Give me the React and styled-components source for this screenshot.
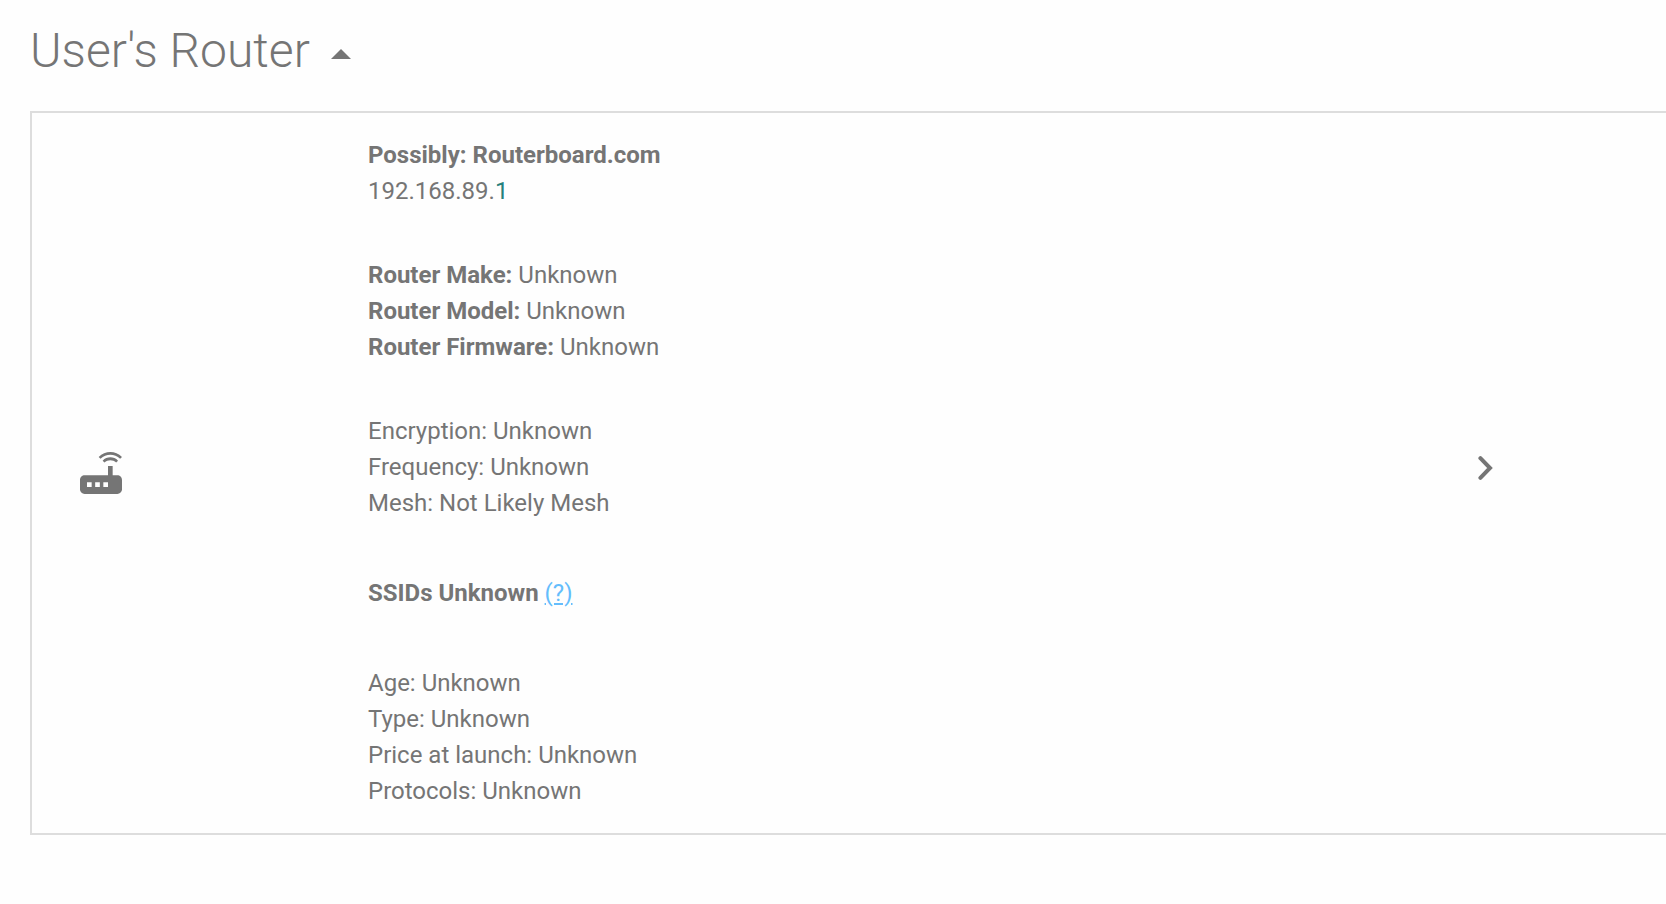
import React from "react";
import styled, { createGlobalStyle } from "styled-components";
import { MdRouter } from "react-icons/md";

const Global = createGlobalStyle`
  *, *::before, *::after { box-sizing: border-box; }
  body {
    margin: 0;
    background: #fefefe;
    color: #757575;
    font-family: Roboto, "Liberation Sans", sans-serif;
    font-size: 24px;
    line-height: 36px;
  }
`;

const Page = styled.main`
  padding: 21px 0 0 30px;
`;

const Heading = styled.h1`
  margin: 0 0 30px;
  font-size: 48px;
  line-height: 60px;
  font-weight: 300;
`;

const Toggle = styled.button`
  display: flex;
  align-items: center;
  gap: 21px;
  padding: 0;
  border: 0;
  background: none;
  color: inherit;
  font: inherit;
  cursor: pointer;
`;

const Caret = styled.svg`
  width: 20px;
  height: 10px;
  margin-top: 6px;
  fill: currentColor;
`;

const Card = styled.section`
  display: grid;
  grid-template-columns: 336px 1fr 188px;
  align-items: center;
  padding: 24px 0;
  border: 2px solid #dddddd;
  border-right: 0;
`;

const RouterIcon = styled(MdRouter)`
  display: block;
  width: 56px;
  height: 56px;
  margin-left: 41px;
`;

const Details = styled.div`
  display: flex;
  flex-direction: column;
  gap: 48px;
`;

const Group = styled.div`
  padding: ${({ $spaced }) => ($spaced ? "6px 0" : "0")};
`;

const Line = styled.p`
  margin: 0;
`;

const Host = styled.span`
  color: #26807c;
`;

const HelpLink = styled.a`
  color: #64bdfc;
`;

const OpenButton = styled.button`
  justify-self: start;
  display: flex;
  padding: 0 0 10px;
  border: 0;
  background: none;
  color: inherit;
  cursor: pointer;
`;

const Chevron = styled.svg`
  width: 15px;
  height: 24px;
  fill: none;
  stroke: currentColor;
  stroke-width: 4;
  stroke-linecap: round;
`;

const Row = ({ label, value }) => (
  <Line>
    <strong>{label}</strong> {value}
  </Line>
);

export default function App() {
  return (
    <>
      <Global />
      <Page>
        <Heading>
          <Toggle type="button" aria-expanded="true" aria-controls="router-card">
            User's Router
            <Caret viewBox="0 0 20 10" aria-hidden="true">
              <path d="M0 10 10 0l10 10z" />
            </Caret>
          </Toggle>
        </Heading>
        <Card id="router-card">
          <RouterIcon aria-hidden="true" />
          <Details>
            <Group>
              <Line>
                <strong>Possibly: Routerboard.com</strong>
              </Line>
              <Line>
                192.168.89.<Host>1</Host>
              </Line>
            </Group>
            <Group>
              <Row label="Router Make:" value="Unknown" />
              <Row label="Router Model:" value="Unknown" />
              <Row label="Router Firmware:" value="Unknown" />
            </Group>
            <Group>
              <Line>Encryption: Unknown</Line>
              <Line>Frequency: Unknown</Line>
              <Line>Mesh: Not Likely Mesh</Line>
            </Group>
            <Group $spaced>
              <Line>
                <strong>SSIDs Unknown</strong> <HelpLink href="#ssids">(?)</HelpLink>
              </Line>
            </Group>
            <Group>
              <Line>Age: Unknown</Line>
              <Line>Type: Unknown</Line>
              <Line>Price at launch: Unknown</Line>
              <Line>Protocols: Unknown</Line>
            </Group>
          </Details>
          <OpenButton type="button" aria-label="Open router details">
            <Chevron viewBox="0 0 15 24" aria-hidden="true">
              <path d="M2.4 2.2 12 12l-9.6 9.8" />
            </Chevron>
          </OpenButton>
        </Card>
      </Page>
    </>
  );
}
